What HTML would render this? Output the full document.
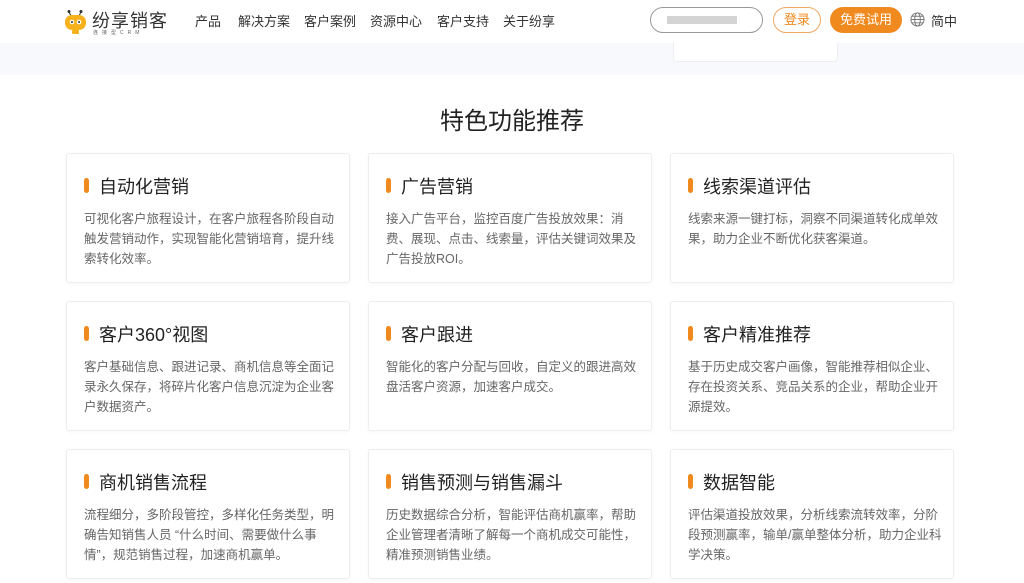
<!DOCTYPE html>
<html><head><meta charset="utf-8"><style>
*{margin:0;padding:0;box-sizing:border-box}
body{width:1024px;height:583px;overflow:hidden;background:#fff;font-family:"Liberation Sans","Noto Sans CJK SC",sans-serif;position:relative}
.hdr{position:absolute;left:0;top:0;width:1024px;height:43px;background:#fff;z-index:2}
.band{position:absolute;left:0;top:43px;width:1024px;height:32px;background:#f8f9fc}
.nav{position:absolute;top:11px;font-size:13px;color:#333}
.card{position:absolute;width:284px;height:130px;background:#fff;border:1px solid #eceef2;border-radius:3px;box-shadow:0 1px 4px rgba(0,0,0,.04)}
.card h3{position:absolute;left:32px;top:19px;font-size:18px;font-weight:normal;color:#222}
.card i{position:absolute;left:17px;top:24px;width:5px;height:15px;border-radius:3px;background:#f08a1e}
.card p{position:absolute;left:17px;top:55px;width:254px;font-size:12.5px;line-height:20px;color:#666}
</style></head><body>
<div class="hdr">
<svg style="position:absolute;left:64px;top:9px" width="24" height="26" viewBox="0 0 24 26"><circle cx="5" cy="2.5" r="1.5" fill="#333"/><circle cx="17" cy="2.5" r="1.5" fill="#333"/><path d="M5 3 L7 7 M17 3 L15 7" stroke="#333" stroke-width="1"/><rect x="1" y="6" width="21" height="15" rx="7" fill="#f6b21d"/><circle cx="8" cy="13" r="2.3" fill="#fff"/><circle cx="15" cy="13" r="2.3" fill="#fff"/><circle cx="8" cy="13" r="1" fill="#333"/><circle cx="15" cy="13" r="1" fill="#333"/><rect x="8" y="21" width="7" height="4" rx="1" fill="#f6b21d"/></svg>
<div style="position:absolute;left:92px;top:7px;font-size:18px;color:#333;letter-spacing:1px">纷享销客</div>
<div style="position:absolute;left:93px;top:29px;font-size:5px;color:#666;letter-spacing:4px">连接型CRM</div>
<div class="nav" style="left:195px">产品</div>
<div class="nav" style="left:238px">解决方案</div>
<div class="nav" style="left:304px">客户案例</div>
<div class="nav" style="left:370px">资源中心</div>
<div class="nav" style="left:437px">客户支持</div>
<div class="nav" style="left:503px">关于纷享</div>
<div style="position:absolute;left:650px;top:7px;width:113px;height:26px;border:1px solid #999;border-radius:13px"><div style="position:absolute;left:16px;top:8px;width:70px;height:8px;background:#d4d4d4"></div></div>
<div style="position:absolute;left:773px;top:7px;width:48px;height:26px;border:1px solid #f2a864;border-radius:13px;color:#f08a1e;font-size:13px;text-align:center;line-height:24px">登录</div>
<div style="position:absolute;left:830px;top:7px;width:72px;height:26px;background:#f08a1e;border-radius:13px;color:#fff;font-size:13px;text-align:center;line-height:26px">免费试用</div>
<svg style="position:absolute;left:910px;top:12px" width="15" height="15" viewBox="0 0 16 16" fill="none" stroke="#777" stroke-width="1"><circle cx="8" cy="8" r="7"/><ellipse cx="8" cy="8" rx="3" ry="7"/><path d="M1 8h14M2 4.5h12M2 11.5h12"/></svg>
<div style="position:absolute;left:931px;top:11px;font-size:13px;color:#333">简中</div>
</div>
<div class="band"></div>
<div style="position:absolute;left:673px;top:40px;width:165px;height:22px;background:#fff;border:1px solid #eceef2;border-radius:4px;z-index:1"></div>
<div style="position:absolute;left:0;top:101px;width:1024px;text-align:center;font-size:24px;color:#222">特色功能推荐</div>

<div class="card" style="left:66px;top:153px"><i></i><h3>自动化营销</h3><p>可视化客户旅程设计，在客户旅程各阶段自动触发营销动作，实现智能化营销培育，提升线索转化效率。</p></div>
<div class="card" style="left:368px;top:153px"><i></i><h3>广告营销</h3><p>接入广告平台，监控百度广告投放效果：消费、展现、点击、线索量，评估关键词效果及广告投放ROI。</p></div>
<div class="card" style="left:670px;top:153px"><i></i><h3>线索渠道评估</h3><p>线索来源一键打标，洞察不同渠道转化成单效果，助力企业不断优化获客渠道。</p></div>
<div class="card" style="left:66px;top:301px"><i></i><h3>客户360°视图</h3><p>客户基础信息、跟进记录、商机信息等全面记录永久保存，将碎片化客户信息沉淀为企业客户数据资产。</p></div>
<div class="card" style="left:368px;top:301px"><i></i><h3>客户跟进</h3><p>智能化的客户分配与回收，自定义的跟进高效盘活客户资源，加速客户成交。</p></div>
<div class="card" style="left:670px;top:301px"><i></i><h3>客户精准推荐</h3><p>基于历史成交客户画像，智能推荐相似企业、存在投资关系、竞品关系的企业，帮助企业开源提效。</p></div>
<div class="card" style="left:66px;top:449px"><i></i><h3>商机销售流程</h3><p>流程细分，多阶段管控，多样化任务类型，明确告知销售人员 “什么时间、需要做什么事情”，规范销售过程，加速商机赢单。</p></div>
<div class="card" style="left:368px;top:449px"><i></i><h3>销售预测与销售漏斗</h3><p>历史数据综合分析，智能评估商机赢率，帮助企业管理者清晰了解每一个商机成交可能性，精准预测销售业绩。</p></div>
<div class="card" style="left:670px;top:449px"><i></i><h3>数据智能</h3><p>评估渠道投放效果，分析线索流转效率，分阶段预测赢率，输单/赢单整体分析，助力企业科学决策。</p></div>
</body></html>
